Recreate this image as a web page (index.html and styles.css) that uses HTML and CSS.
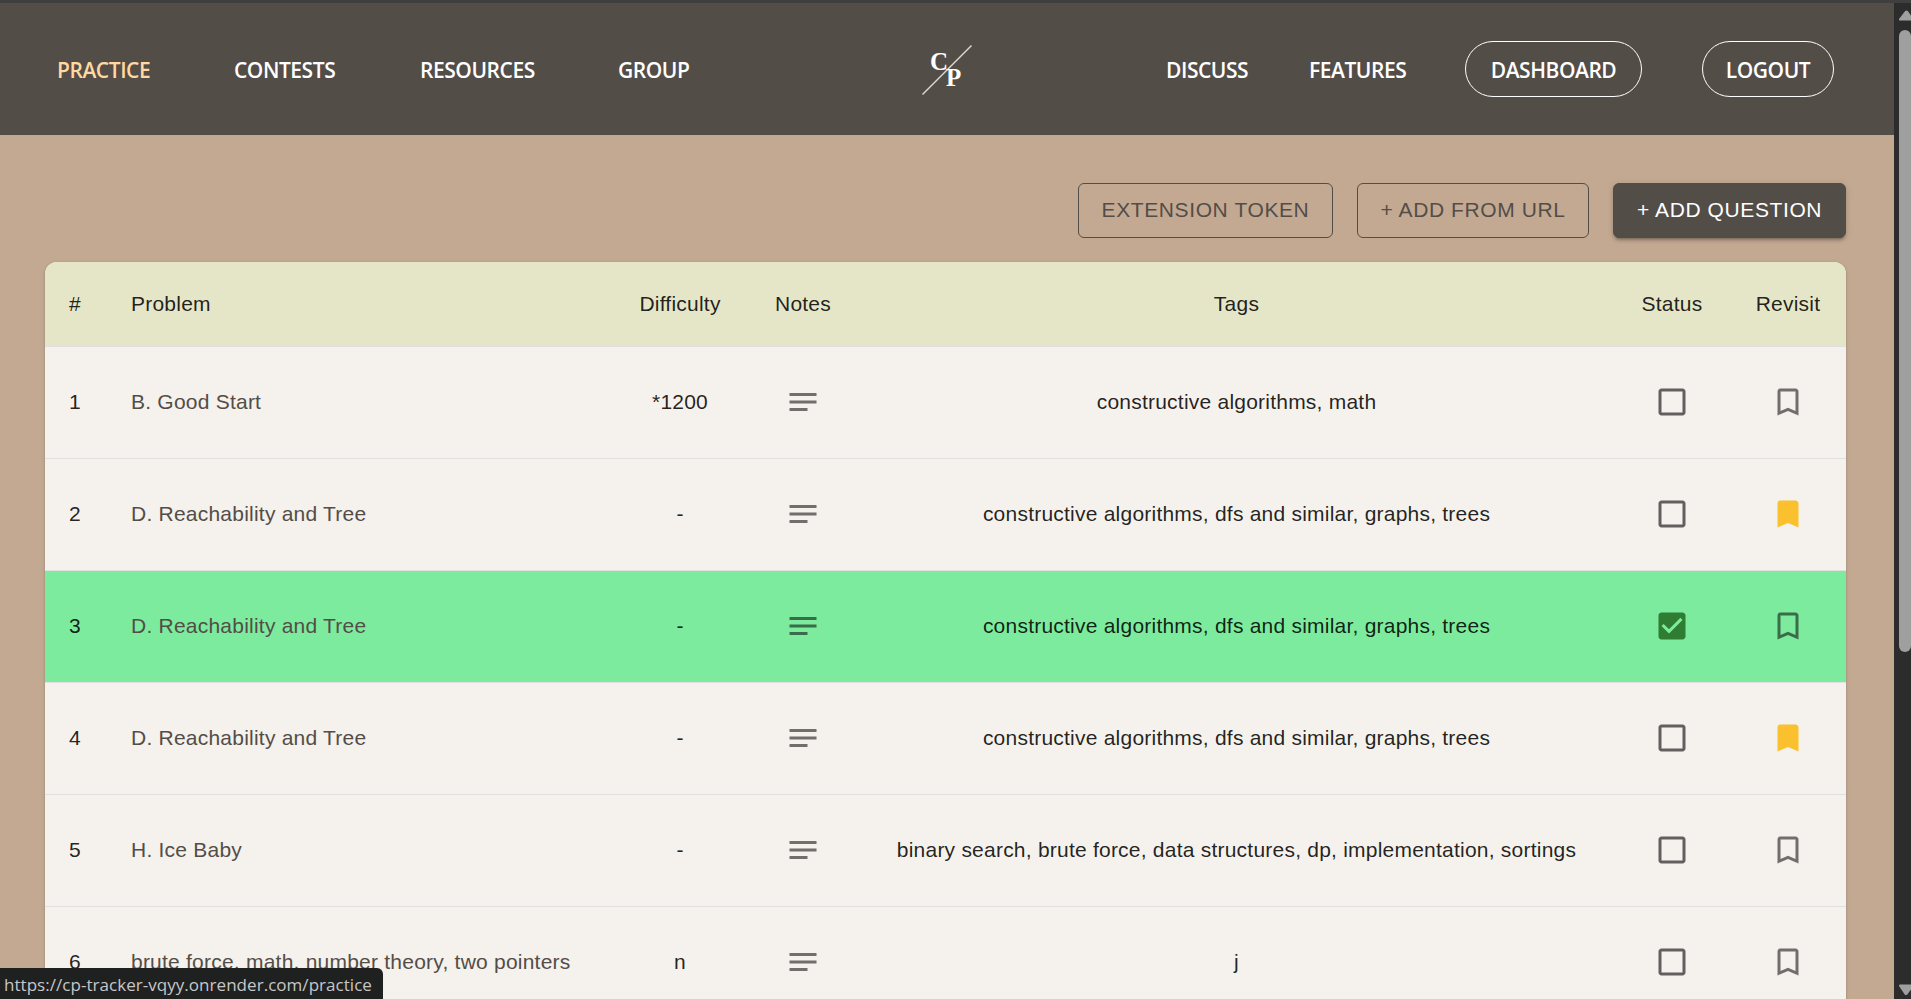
FILE: index.html
```
<!DOCTYPE html>
<html lang="en">
<head>
<meta charset="utf-8">
<title>CP Tracker</title>
<link rel="stylesheet" href="styles.css">
</head>
<body>
<svg width="0" height="0" class="defs">
  <symbol id="notes" viewBox="0 0 24 24"><path d="M21 11.010L3 11v2h18zM3 16h12v2H3zM21 6H3v2.010L21 8z"/></symbol>
  <symbol id="box" viewBox="0 0 24 24"><path d="M19 5v14H5V5h14m0-2H5c-1.1 0-2 .9-2 2v14c0 1.100.9 2 2 2h14c1.100 0 2-.9 2-2V5c0-1.100-.9-2-2-2z"/></symbol>
  <symbol id="checked" viewBox="0 0 24 24"><path d="M19 3H5c-1.110 0-2 .9-2 2v14c0 1.100.89 2 2 2h14c1.110 0 2-.9 2-2V5c0-1.100-.89-2-2-2zm-9 14l-5-5 1.410-1.410L10 14.170l7.590-7.590L19 8l-9 9z"/></symbol>
  <symbol id="mark" viewBox="0 0 24 24"><path d="M17 3H7c-1.100 0-2 .9-2 2v16l7-3 7 3V5c0-1.100-.9-2-2-2zm0 15l-5-2.180L7 18V5h10v13z"/></symbol>
  <symbol id="marked" viewBox="0 0 24 24"><path d="M17 3H7c-1.100 0-1.990.9-1.990 2L5 21l7-3 7 3V5c0-1.100-.9-2-2-2z"/></symbol>
</svg>
<div class="window">
  <div class="page">
    <header class="nav">
      <nav class="links left">
        <a class="active">PRACTICE</a><a>CONTESTS</a><a>RESOURCES</a><a>GROUP</a>
      </nav>
      <svg class="logo" viewBox="0 0 52 52" width="52" height="52">
        <line x1="1.500" y1="50.500" x2="50.500" y2="1.500"/>
        <text x="9" y="25.500">C</text>
        <text x="25" y="41.500">P</text>
      </svg>
      <nav class="links right">
        <a>DISCUSS</a><a>FEATURES</a><a class="pill dash">DASHBOARD</a><a class="pill">LOGOUT</a>
      </nav>
    </header>
    <main>
      <div class="actions">
        <button class="btn token">EXTENSION TOKEN</button>
        <button class="btn url">+ ADD FROM URL</button>
        <button class="btn solid">+ ADD QUESTION</button>
      </div>
      <section class="table">
        <div class="row head"><span>#</span><span class="name">Problem</span><span>Difficulty</span><span>Notes</span><span class="tags">Tags</span><span>Status</span><span>Revisit</span></div>
        <div class="row"><span>1</span><span class="name">B. Good Start</span><span>*1200</span><svg><use href="#notes"/></svg><span class="tags">constructive algorithms, math</span><svg class="check"><use href="#box"/></svg><svg><use href="#mark"/></svg></div>
        <div class="row"><span>2</span><span class="name">D. Reachability and Tree</span><span>-</span><svg><use href="#notes"/></svg><span class="tags">constructive algorithms, dfs and similar, graphs, trees</span><svg class="check"><use href="#box"/></svg><svg class="saved"><use href="#marked"/></svg></div>
        <div class="row solved"><span>3</span><span class="name">D. Reachability and Tree</span><span>-</span><svg><use href="#notes"/></svg><span class="tags">constructive algorithms, dfs and similar, graphs, trees</span><svg class="done"><use href="#checked"/></svg><svg><use href="#mark"/></svg></div>
        <div class="row"><span>4</span><span class="name">D. Reachability and Tree</span><span>-</span><svg><use href="#notes"/></svg><span class="tags">constructive algorithms, dfs and similar, graphs, trees</span><svg class="check"><use href="#box"/></svg><svg class="saved"><use href="#marked"/></svg></div>
        <div class="row"><span>5</span><span class="name">H. Ice Baby</span><span>-</span><svg><use href="#notes"/></svg><span class="tags">binary search, brute force, data structures, dp, implementation, sortings</span><svg class="check"><use href="#box"/></svg><svg><use href="#mark"/></svg></div>
        <div class="row"><span>6</span><span class="name">brute force, math, number theory, two pointers</span><span>n</span><svg><use href="#notes"/></svg><span class="tags">j</span><svg class="check"><use href="#box"/></svg><svg><use href="#mark"/></svg></div>
      </section>
    </main>
  </div>
  <aside class="scrollbar">
    <svg width="17" height="12" viewBox="0 0 17 12"><path d="M6 11.500h11V6.500L13.800 2q-1.300-1.200-2.600 0L5 10q-.5 1.500 1 1.500z"/></svg>
    <div class="thumb"></div>
    <svg class="down" width="17" height="12" viewBox="0 0 17 12"><path d="M6 .5h11V5.500L13.300 10.500q-1.300 1.200-2.600 0L5 2Q4.500 .5 6 .5z"/></svg>
  </aside>
</div>
<div class="status">https://cp-tracker-vqyy.onrender.com/practice</div>
</body>
</html>
```
FILE: styles.css
```
* { box-sizing: border-box; }
body { margin: 0; background: #c3a992; font-family: "Liberation Sans", Arial, sans-serif; overflow: hidden; }
.defs { position: absolute; }
.window { display: flex; height: 999px; border-top: 3px solid #3f3f3f; overflow: hidden; }
.page { width: 1894px; overflow: hidden; }

.nav { display: flex; align-items: center; height: 132px; background: #534d48; padding: 0 60px 0 57px; }
.links { display: flex; align-items: center; font: 600 21px "Open Sans", "Segoe UI", sans-serif; color: #fff; white-space: nowrap; letter-spacing: -0.45px; }
.links a { padding-top: 2px; }
.left { display: grid; grid-template-columns: 177px 186px 198px 1fr; width: 864px; }
.left .active { color: #ffd9a0; }
.logo { margin-top: 1px; }
.logo line { stroke: #dcd8d3; stroke-width: 1.500; }
.logo text { font: bold 25px "Liberation Serif", serif; fill: #fff; }
.right { display: grid; grid-template-columns: 143px 156px 237px 132px; margin-left: auto; }
.links .pill { display: flex; align-items: center; justify-content: center; width: 132px; height: 56px; border: 1px solid #fff; border-radius: 28px; }
.links .dash { width: 177px; }

main { padding: 48px 48px 0 45px; }
.actions { display: flex; justify-content: flex-end; gap: 24px; height: 55px; margin-bottom: 24px; }
.btn { font: 21px "Liberation Sans", Arial, sans-serif; letter-spacing: 0.6px; color: #534d48; background: none; border: 1px solid #534d48; border-radius: 6px; padding: 0 0 2px; white-space: nowrap; }
.token { width: 255px; }
.url { width: 232px; }
.solid { width: 233px; background: #534d48; color: #fff; box-shadow: 0 4px 2px -3px rgba(0,0,0,.2), 0 3px 3px rgba(0,0,0,.14), 0 1px 7px rgba(0,0,0,.12); }

.table { background: #f5f1ec; border-radius: 12px 12px 0 0; box-shadow: 0 3px 2px -2px rgba(0,0,0,.2), 0 1px 2px rgba(0,0,0,.14), 0 1px 4px rgba(0,0,0,.12); }
.row { display: grid; grid-template-columns: 60px 507px 136px 110px 756px 116px 116px; align-items: center; justify-items: center; height: 112px; padding-bottom: 1px; border-bottom: 1px solid #e0e0e0; font-size: 21px; letter-spacing: 0.225px; color: rgba(0,0,0,.87); white-space: nowrap; }
.row .name { justify-self: start; padding-left: 26px; color: #534d48; }
.row .tags { padding-left: 1px; }
.row.head { height: 85px; padding-bottom: 0; background: #e5e6c7; border-radius: 12px 12px 0 0; }
.head .name { color: rgba(0,0,0,.87); }
.row svg { width: 36px; height: 36px; fill: rgba(0,0,0,.54); }
.row .check { fill: rgba(0,0,0,.6); }
.row .saved { fill: #fbc02d; }
.row .done { fill: #2e7d32; }
.row.solved { background: #7deb9d; }

.scrollbar { display: flex; flex-direction: column; width: 17px; background: #2c2c2c; padding: 6px 0 3px; }
.scrollbar svg { flex: none; fill: #9f9f9f; }
.thumb { width: 12px; height: 622px; margin: 9px 0 0 5px; border-radius: 6px; background: #9f9f9f; }
.down { margin-top: auto; }
.status { position: absolute; left: 0; bottom: 0; width: 383px; height: 31px; padding-left: 4px; border-radius: 0 6px 0 0; background: #1f2020; color: #c7c7c7; font: 17px/33px "Open Sans", sans-serif; letter-spacing: .04px; white-space: nowrap; }
```
